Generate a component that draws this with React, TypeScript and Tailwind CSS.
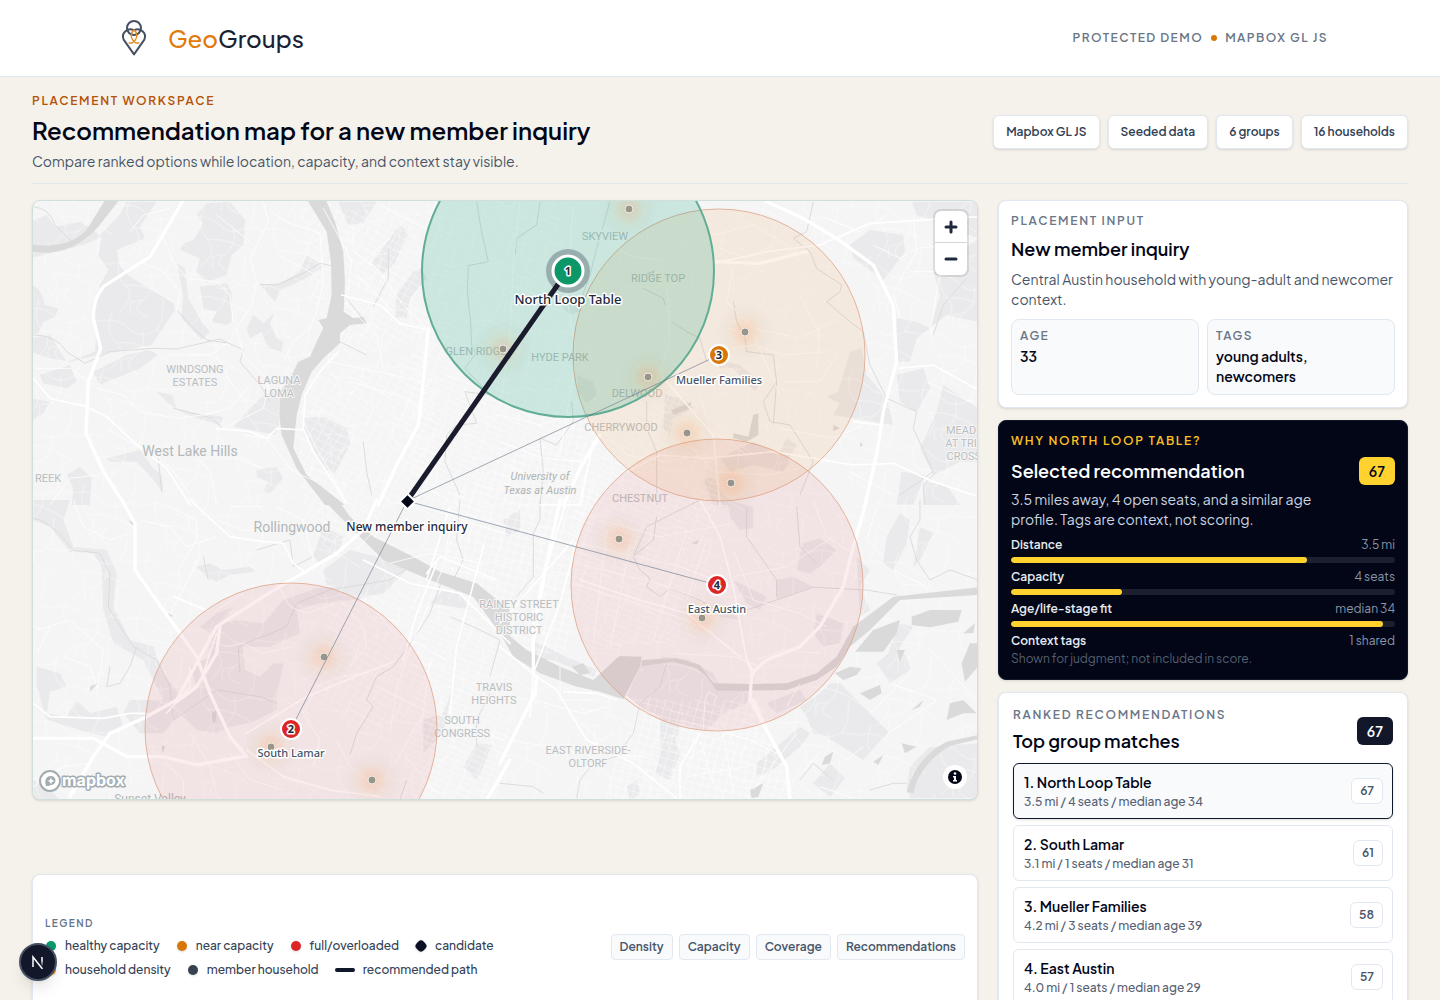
import React from "react";

type Quad = {
  id: string;
  at: string;
  parks: string[];
  water: string[];
  streams: string[];
  minor: string[];
  major: string[];
  highway: string[];
};

/* Base map geometry, split in four tiles drawn at three units per pixel. */
const tiles: Quad[] = [
  {
    id: "nw",
    at: "translate(30 195) scale(0.3333)",
    parks: [
      "M0 80L50 60 75 95 150 80 210 120 270 60 290 20 380 20 330 95 345 130 260 165 270 215 300 245 430 325 435 345 365 450 215 478 120 500 60 490 0 470 0 430 60 420 110 500 195 470 200 400 190 330 210 270 235 225 205 180 215 125 160 150 0 190Z",
      "M0 270Q30 270 45 330L85 340 75 365 40 380 25 415 0 420Z",
      "M530 25L600 20 645 75 640 150 605 180 590 240 530 262 500 230 510 190 450 165 460 145 490 135 520 85 500 60Z",
      "M510 275L590 265 605 290 605 380 590 390 545 380 560 350 520 340Z",
      "M440 205L465 220 475 310 515 380 540 410 515 435 455 370 460 300Z",
      "M650 400L670 360 700 385 735 350 720 385 740 430 760 440 755 470 715 460 695 410 660 430Z",
      "M925 20L1040 20 1000 85 955 90Z",
      "M1110 90L1135 115 1110 165 1095 205 1060 235 1025 205 1065 150Z",
      "M820 668L880 665 950 700 962 745 915 835 880 820 850 760 820 710Z",
      "M610 695L690 610 750 575 748 695 735 720Z",
      "M380 590L430 600 440 640 500 655 580 665 570 690 500 670 450 650 410 620Z",
      "M110 840L150 815 185 850 180 930 125 930 130 880Z",
      "M30 540L120 510 140 560 110 580 40 565Z",
      "M190 530L290 480 360 465 385 480 330 520 230 560 210 570Z",
      "M0 610L60 620 40 655 0 680Z",
      "M230 790L330 765 370 820 395 840 400 895 375 860 320 800 240 800Z",
      "M680 825L740 815 760 850 720 895 700 890 715 860 680 845Z",
      "M1100 300L1150 230 1175 220 1190 250 1140 310 1130 370 1095 365Z",
      "M690 270L750 265 810 230 830 180 880 215 830 250 750 285 735 320Z",
    ],
    water: [
      "M832 15L888 15 915 80 940 170 945 260 941 350 970 370 1000 365 1010 385 960 390 930 415 930 445 880 490 845 530 815 600 800 660 748 660 752 590 785 540 805 500 840 485 865 430 880 400 865 375 890 370 905 300 903 200 890 110Z",
      "M748 660L800 660 790 760 830 840 945 930 885 930 800 820 755 720Z",
      "M0 148Q110 165 170 105L225 15 268 15 205 95Q120 190 0 170Z",
    ],
    streams: [
      "M10 35Q60 40 75 90L120 135",
      "M10 420Q80 420 110 470L165 505 240 470 370 460 440 462 570 432 640 465 630 500 690 570 720 620",
      "M690 268L740 270 820 235 870 205 905 212",
      "M440 345L490 400 530 435 600 445",
      "M1030 335L1075 250 1075 160M950 310L1010 385",
      "M1340 20L1355 110 1375 200 1315 212 1312 290 1322 380 1325 450 1338 475 1305 520 1380 600 1305 590 1340 685 1280 690 1250 720 1245 800 1290 900",
      "M430 640L550 670 575 700M385 790L395 890",
      "M1000 740L1010 830 1025 900",
      "M930 440L1010 480",
    ],
    minor: [
      "M700 20L715 80 660 190 680 260 665 330 620 400 640 480 720 560 700 640 580 700",
      "M720 50L780 85 870 115 880 260 860 350 840 400 790 440 760 500",
      "M400 130L430 200 470 250 560 260 600 300 610 380",
      "M200 580L280 600 330 650 440 670 520 660 600 640 660 570",
      "M1040 20L1100 60 1190 100M970 90L970 170 1040 220 1120 330 1190 400",
      "M880 40L940 150 965 200 950 330 1040 420 1060 520",
      "M330 200L400 230 450 290 440 350M420 480L480 480 540 480 600 440",
      "M20 520L120 520 190 570M230 700L330 760 390 790 440 840 500 930",
      "M60 930L120 850 200 840M640 720L710 730 790 830 860 860",
      "M820 680L860 760 940 900M960 560L1100 600 1180 640M900 500L1180 560",
      "M980 240L1090 350M1000 200L1080 130M560 480L600 560 650 620",
      "M300 110L340 60 420 40M560 60L660 140M740 180L860 240",
      "M560 720L620 790 700 820M480 760L540 830 560 930",
    ],
    major: [
      "M10 550L60 610 170 635 230 665 310 740 410 820 480 930",
      "M560 700L660 710 710 730 740 700 820 705 825 600 870 530 925 470",
      "M820 700L850 770 890 830 950 925",
      "M935 300L1050 330 1110 385 1195 405",
    ],
    highway: [
      "M460 15L360 185 220 275Q190 310 190 370L212 460 175 560 168 715 220 830 285 930",
      "M1195 400L1180 560 1165 690 1100 810 1045 930",
    ],
  },
  {
    id: "ne",
    at: "translate(500 195) scale(0.3333)",
    parks: [
      "M1050 150L1110 105 1210 120 1215 170 1170 230 1150 255 1060 190Z",
      "M1235 20L1435 20 1435 130 1330 90 1250 60Z",
      "M1300 230L1435 130 1435 380 1340 360 1250 430 1230 500 1185 500 1190 370 1250 380 1290 400 1320 300Z",
      "M1050 470L1085 460 1100 540 1160 610 1180 690 1060 670 1000 660 1020 625 980 605 1015 590Z",
      "M1190 540L1270 520 1290 580 1250 650 1200 620Z",
      "M1330 570L1435 640 1435 800 1380 800 1300 840 1260 760 1310 650Z",
      "M1205 830L1275 840 1240 930 1190 930Z",
      "M495 600L550 610 580 640 520 670 510 720 490 700Z",
      "M660 790L760 740 870 800 850 830 760 810 690 830Z",
      "M650 495L720 510 780 560 765 590 700 520 660 520Z",
      "M610 850L640 850 670 900 720 930 640 930Z",
      "M230 540L280 560 290 600 260 625 235 590Z",
      "M860 730L890 750 860 800 830 790Z",
      "M150 300L210 360 240 350 230 310Z",
      "M1270 860L1340 870 1380 930 1270 930Z",
    ],
    water: [
      "M700 715L745 725 760 660 775 655 775 720 740 740 700 730Z",
      "M515 645L575 620 570 640 520 660Z",
      "M1000 690L1020 700 1000 708Z",
      "M1080 740L1090 750 1080 755Z",
      "M440 235L465 225 460 240 480 255 450 255Z",
    ],
    streams: [
      "M940 20L920 110 880 130 930 170 950 220 1025 270 1020 290 980 320 1050 380 1090 410 1110 510 1160 610 1250 650 1240 700 1300 830 1200 900",
      "M330 20L290 160 270 240 230 350M700 320L710 380 735 430 740 470 820 480 830 560 790 620 810 680 870 690 940 800 900 900",
      "M120 20L110 90 50 130 45 180M430 280L490 310 495 330M515 380L560 410 600 430 620 500",
      "M215 620L220 680 170 750 120 730 130 830 120 930M440 620L440 700 470 770 470 930",
      "M830 560L820 690M1400 250L1330 330 1300 420M1310 830L1270 870 1275 930",
    ],
    minor: [
      "M60 20L40 200 30 420 0 640M220 30L200 300 230 480 180 780",
      "M640 120L760 90 860 150 900 200M660 160L740 190 820 150",
      "M700 210L680 320 760 400 900 430 1000 380M650 470L760 450 850 480 980 470",
      "M860 560L960 560 1010 480M840 700L1000 730 1090 690",
      "M1120 150L1200 190 1250 160 1340 150M1240 60L1250 170 1180 290 1200 370",
      "M980 70L1080 110 1160 60M300 100L380 180 500 200M500 240L510 440 470 560",
      "M280 680L380 780 500 800 620 780M560 740L640 830 800 840 900 820",
      "M0 660L120 690 210 660M0 740L130 790 250 800M600 600L630 700 740 780",
      "M1230 230L1320 230 1290 420M1280 560L1410 620M1050 830L1180 900",
      "M900 300L960 420 950 520M680 400L760 420 840 600",
    ],
    major: [
      "M640 205L800 170 960 150 1110 85 1435 65",
      "M380 830L480 780 620 790 820 770 1060 810 1180 805 1300 860 1435 905",
      "M1195 520L1300 510 1435 585M1060 680L1140 690",
      "M120 930L240 930 280 740",
      "M500 560L640 720 660 930",
    ],
    highway: [
      "M800 20L900 65 1010 130 1120 210 1180 330 1190 500 1150 650 1130 780 1095 930",
      "M300 720L240 820 190 930",
      "M640 200L780 205 920 170",
    ],
  },
  {
    id: "sw",
    at: "translate(30 500) scale(0.3333)",
    parks: [
      "M75 0L120 0 100 60 130 140 230 150 260 220 250 320 300 420 370 440 400 520 460 600 500 560 480 500 540 470 540 380 620 360 700 370 760 300 860 265 1000 250 1100 200 1140 200 1060 280 970 300 870 310 800 330 810 400 720 440 640 440 645 510 690 530 730 490 760 490 740 590 740 630 660 670 600 680 560 700 500 690 450 640 400 700 330 700 280 640 300 600 400 600 340 480 250 430 220 330 215 200 190 160 120 155 60 80 10 60 10 0Z",
      "M500 200L540 190 580 210 660 200 675 215 600 225 560 245 530 230Z",
      "M880 210L960 150 1040 170 1120 190 1080 240 980 262 890 255Z",
      "M20 500L90 520 110 560 60 575 50 640 110 650 140 600 180 640 260 620 280 680 230 710 150 690 50 660 20 560Z",
      "M880 80L940 110 925 160 870 195 850 165Z",
      "M1180 660L1240 640 1270 560 1240 700 1180 760Z",
      "M1340 730L1385 735 1360 800 1340 840 1300 800Z",
      "M10 840L60 870 90 900 10 900Z",
      "M1240 270L1290 280 1320 330 1270 320 1200 310Z",
      "M510 380L560 340 610 320 590 350 540 400Z",
    ],
    water: [
      "M880 0L925 0 960 50 1030 110 1150 170 1230 215 1340 250 1440 330 1440 440 1410 400 1330 290 1200 240 1060 180 990 110Z",
      "M295 60L315 68 308 76Z",
      "M415 340L430 348 415 352Z",
      "M395 735L405 740 398 760Z",
      "M545 640L560 630 558 665 548 670Z",
      "M180 560L205 548 180 575Z",
    ],
    streams: [
      "M10 55Q60 60 130 150L210 160 240 220 235 320 290 410 310 440 380 480 420 560 430 660 460 640 560 570 690 590 740 610",
      "M320 440L300 500 270 550 230 560 240 500M630 520L625 440 770 380 800 310 900 270 1080 240 1140 200",
      "M1240 230L1200 340 1150 420 1090 500 1040 530 1010 600 1030 620 980 700 960 765",
      "M1290 0L1280 120 1300 180 1270 240 1280 280M1260 350L1330 380 1410 420 1380 530",
      "M520 170L535 240M1380 580L1340 660 1340 740M1130 840L1110 900",
      "M680 150L780 120 790 200 850 170",
    ],
    minor: [
      "M130 0L160 80 240 120 300 100M330 60L420 80 470 140 560 110",
      "M420 340L480 230 500 180M440 290L520 330M560 330L640 280",
      "M20 390L120 360 220 450 200 580M100 470L180 500 200 560",
      "M560 60L640 90 780 90M600 20L700 20M740 20L820 60 850 180",
      "M530 420L590 440 640 430 700 460 790 440M860 560L930 530 1010 520 1100 480",
      "M850 580L820 640 870 720 850 800M930 300L1000 380 1010 440 960 500",
      "M740 250L780 320 830 340 920 310M1030 320L1090 400 1180 440 1250 480",
      "M1260 80L1240 200 1160 400 1100 560 1080 700M1180 20L1420 100",
      "M1200 480L1180 640 1090 800M1220 640L1420 720M1040 560L1200 640",
      "M920 720L960 800 1070 880M1120 760L1220 880M10 860L100 800 180 790",
      "M480 700L540 800 560 880M380 760L460 840 460 890M600 760L660 840 760 870",
      "M420 20L500 60 500 120 440 220M60 380L20 460",
      "M1080 190L1200 160 1360 190M980 150L1060 60",
    ],
    major: [
      "M480 0L600 110 660 120 760 130 790 190 830 220",
      "M10 610L60 650 220 655 300 640 350 640M1000 180L1140 250 1290 280 1340 330 1440 430",
      "M1190 220L1230 170 1400 240M430 290L530 330M650 700L830 590 1000 520 1080 490",
      "M480 500L480 560 410 640M560 400L520 520M1220 190L1160 340 1120 480",
      "M1260 20L1190 240M1360 140L1280 440 1260 640",
      "M650 750L760 830 900 870 1050 890",
    ],
    highway: [
      "M275 0L315 70 315 210 400 330 500 470 540 580 600 710 650 770",
      "M1040 0L1000 90 920 160 800 230 700 290 560 380 440 600 350 650 240 700 190 770 120 890",
      "M10 715L190 715 290 770 400 770 500 795 640 770",
      "M570 380L560 460 500 560 440 605",
      "M1440 780L1370 900",
    ],
  },
  {
    id: "se",
    at: "translate(500 500) scale(0.3333)",
    parks: [
      "M425 490L490 470 570 480 640 520 660 560 750 570 740 610 670 640 620 690 500 660 420 620 380 590Z",
      "M990 550L1020 550 1165 695 1090 780 980 710 940 700 920 650 900 620 960 580Z",
      "M480 640L530 660 540 690 525 720 540 760 510 840 465 820 480 760Z",
      "M1130 490L1190 440 1220 470 1230 510 1170 550Z",
      "M1200 370L1240 380 1200 440 1190 500 1160 470Z",
      "M1260 80L1300 100 1260 180 1240 200 1250 140Z",
      "M1150 190L1160 110 1200 40 1230 60 1220 130 1180 210Z",
      "M680 0L760 20 760 85 720 90 690 50Z",
      "M910 130L960 115 1010 150 960 200 930 220 890 210 900 160Z",
      "M950 340L1030 370 1020 430 970 440 940 400Z",
      "M830 240L880 230 940 260 830 300Z",
      "M700 240L760 270 800 290 780 330 740 310Z",
      "M770 790L900 680 930 700 900 740 830 800 800 820 770 830Z",
      "M990 790L1035 835 990 890 940 850Z",
      "M1220 870L1230 800 1290 740 1435 730 1435 895 1230 895Z",
      "M1070 170L1110 210 1080 260 1110 330 1080 350Z",
      "M380 860L410 840 420 880 390 900Z",
      "M10 60L60 30 60 90 20 110Z",
      "M650 340L700 340 720 360 660 350Z",
      "M100 420L200 470 290 510 280 530 160 480 100 480Z",
      "M800 610L900 570 920 600 830 640Z",
    ],
    water: [
      "M0 330L20 400 80 450 180 500 280 540 350 475 360 468 425 470 420 500 370 598 300 575 230 560 120 520 40 470 0 400Z",
      "M425 480L530 475 600 495 640 550 760 552 860 550 950 520 1010 470 1060 380 1180 290 1435 262 1435 285 1200 300 1110 390 1050 440 1010 500 950 540 860 570 740 572 650 572 620 530 590 505 520 485 425 498Z",
      "M1065 455L1120 390 1200 360 1190 400 1150 455Z",
      "M1235 350L1290 330 1385 330 1375 365 1290 382 1235 375Z",
      "M1005 520L1050 500 1085 505 1070 525 1030 540Z",
      "M1340 660L1350 610 1390 600 1430 640 1390 640Z",
      "M1385 490L1410 430 1435 430 1435 500 1395 545Z",
      "M1080 580L1140 555 1145 580 1110 600Z",
      "M975 770L1000 755 990 790 965 795Z",
      "M1120 785L1150 765 1135 795Z",
      "M1205 730L1250 740 1215 760Z",
      "M1235 630L1270 600 1260 620Z",
      "M1190 450L1215 450 1200 485Z",
      "M1390 400L1425 370 1420 400Z",
      "M575 130L597 120 590 132Z",
      "M215 500L250 490 270 520 240 525Z",
      "M750 870L790 850 775 890 755 895Z",
      "M1220 875Q1250 770 1340 725L1435 705V718L1350 738Q1260 790 1240 880Z",
    ],
    streams: [
      "M470 50L460 120 400 170 420 210 450 235 440 260 480 290 510 265 600 300 660 340 740 330 830 300 940 262 1100 270 1190 285",
      "M740 20L740 110 830 240 830 290M890 20L900 140 950 190M1260 0L1260 60 1230 110 1250 180 1290 240 1350 210 1435 240",
      "M120 0L120 60 100 100 100 230 50 290M600 0L440 80 400 170",
      "M500 490L480 560 420 610 400 700 370 740M0 850L100 860 130 880M1110 870L1180 850 1220 850",
      "M380 760L280 790 240 840 230 895M900 840L940 790 1000 840",
    ],
    minor: [
      "M240 130L540 200 700 260M230 190L470 250 640 310M220 250L560 360 640 400",
      "M320 90L280 430M390 130L330 450M560 90L460 420M620 120L560 300",
      "M300 60L480 110 700 70M700 150L760 300 900 340 980 380",
      "M700 230L860 200 1000 110M940 0L980 110 1060 160M1130 20L1100 120 1150 170",
      "M520 460L700 470 780 500M770 480L850 450 960 460M860 620L900 550",
      "M610 690L615 600 625 575 650 590 640 610M540 660L700 700 760 640",
      "M180 500L180 600 290 600M200 640L280 700 300 760 430 770",
      "M100 600L250 640 320 620M30 720L240 760 340 700",
      "M560 780L680 700 750 720 830 760M600 720L640 850M670 700L700 880M560 830L740 800",
      "M890 700L760 870M880 840L960 760M1040 780L1090 740M1170 550L1310 600 1165 700",
      "M1240 510L1110 640M1180 210L1280 260M1300 460L1430 600M960 860L1060 895",
    ],
    major: [
      "M600 0L660 110 700 260 740 480",
      "M0 440L110 530 170 570 260 720 400 790 530 895",
      "M190 575L290 580M380 590L440 640M290 580L350 600",
      "M0 370L220 120M540 900L540 800 600 700",
      "M230 130L180 310 100 520 90 650M200 0L140 200 100 440",
      "M240 240L420 300 560 340 720 470",
    ],
    highway: [
      "M1100 0L1060 140 1030 260 960 380 900 440 800 480 755 520 750 600 800 690 860 800 870 900",
      "M740 480L760 520M760 600L800 690",
      "M110 530L105 580 0 790",
      "M180 0L100 380 100 520",
    ],
  },
];

const streetFields = [
  { fill: "url(#gridA)", d: "M300 380L430 350 440 500 400 500 330 560 300 500Z" },
  { fill: "url(#gridB)", d: "M425 201L560 201 580 420 470 520 425 500 400 420 425 300Z" },
  { fill: "url(#gridC)", d: "M445 500L580 420 600 500 570 650 520 660 445 580Z" },
  { fill: "url(#gridB)", d: "M580 420L680 360 720 480 700 640 590 650 570 560Z" },
  { fill: "url(#gridB)", d: "M420 600L470 610 520 670 500 799 400 799 410 700Z" },
  { fill: "url(#gridA)", d: "M330 600L420 590 430 700 370 740 310 700Z" },
  { fill: "url(#gridA)", d: "M300 210L420 210 420 340 350 360 310 300Z" },
  { fill: "url(#lanes)", d: "M33 201H980V799H33Z" },
  { fill: "url(#gridC)", d: "M640 700L760 700 800 799 600 799Z" },
];

const placeLabels: { x: number; y: number; lines: string[] }[] = [
  { x: 195, y: 373, lines: ["WINDSONG", "ESTATES"] },
  { x: 279, y: 384, lines: ["LAGUNA", "LOMA"] },
  { x: 605, y: 240, lines: ["SKYVIEW"] },
  { x: 658, y: 282, lines: ["RIDGE TOP"] },
  { x: 476, y: 355, lines: ["GLEN RIDGE"] },
  { x: 560, y: 361, lines: ["HYDE PARK"] },
  { x: 637, y: 397, lines: ["DELWOOD"] },
  { x: 621, y: 431, lines: ["CHERRYWOOD"] },
  { x: 640, y: 502, lines: ["CHESTNUT"] },
  { x: 973, y: 434, lines: ["MEADOWS", "AT TRINITY", "CROSSING"] },
  { x: 48, y: 482, lines: ["REEK"] },
  { x: 519, y: 608, lines: ["RAINEY STREET", "HISTORIC", "DISTRICT"] },
  { x: 494, y: 691, lines: ["TRAVIS", "HEIGHTS"] },
  { x: 462, y: 724, lines: ["SOUTH", "CONGRESS"] },
  { x: 588, y: 754, lines: ["EAST RIVERSIDE-", "OLTORF"] },
];

const households = [
  [629, 209], [503, 349], [745, 332], [648, 377], [687, 433], [731, 483],
  [619, 539], [702, 618], [324, 657], [271, 747], [372, 780],
];

const groups = [
  { n: "2", name: "South Lamar", x: 291, y: 729, ly: 757, color: "#dc2626" },
  { n: "3", name: "Mueller Families", x: 719, y: 355, ly: 384, color: "#d97706" },
  { n: "4", name: "East Austin", x: 717, y: 585, ly: 613, color: "#dc2626" },
];

function AustinMap() {
  return (
    <svg
      className="absolute inset-0 h-full w-full"
      viewBox="33 201 944 598"
      preserveAspectRatio="xMidYMid slice"
      role="img"
      aria-label="Map of Austin with group coverage"
    >
      <defs>
        <pattern id="gridA" width="9" height="7" patternUnits="userSpaceOnUse" patternTransform="rotate(28)">
          <path d="M0 0H9M0 0V7" stroke="#fff" strokeOpacity="0.700" strokeWidth="1" />
        </pattern>
        <pattern id="gridB" width="12" height="6" patternUnits="userSpaceOnUse" patternTransform="rotate(22)">
          <path d="M0 0H12M0 0V6" stroke="#fff" strokeOpacity="0.700" strokeWidth="1" />
        </pattern>
        <pattern id="gridC" width="8" height="8" patternUnits="userSpaceOnUse" patternTransform="rotate(15)">
          <path d="M0 0H8M0 0V8" stroke="#fff" strokeOpacity="0.900" strokeWidth="1" />
        </pattern>
        <pattern id="lanes" width="74" height="58" patternUnits="userSpaceOnUse" patternTransform="rotate(9)">
          <path
            d="M0 12Q18 4 30 14T58 12L74 12M12 0Q6 20 20 30T18 58M44 14Q52 30 40 42T48 58M20 30Q44 24 74 40M58 12L62 0M30 58L28 46 40 42M62 58L60 38"
            fill="none"
            stroke="#fff"
            strokeOpacity="0.450"
            strokeWidth="1"
          />
        </pattern>
        <radialGradient id="heat">
          <stop offset="0" stopColor="#f08a48" stopOpacity="0.240" />
          <stop offset="0.350" stopColor="#f0a060" stopOpacity="0.170" />
          <stop offset="0.500" stopColor="#d8b884" stopOpacity="0.110" />
          <stop offset="0.750" stopColor="#b8a890" stopOpacity="0.050" />
          <stop offset="1" stopColor="#94a3b8" stopOpacity="0" />
        </radialGradient>
      </defs>

      <rect x="0" y="0" width="1440" height="1000" fill="#f5f5f5" />
      {tiles.map((t) => (
        <g key={t.id} transform={t.at}>
          <path d={t.parks.join("")} fill="#eaeaec" />
        </g>
      ))}
      {streetFields.map((f, i) => (
        <path key={i} d={f.d} fill={f.fill} />
      ))}
      {tiles.map((t) => (
        <g key={t.id} transform={t.at} fill="none" strokeLinejoin="round">
          <path d={t.streams.join("")} stroke="#dcdcdd" strokeWidth="3" />
          <path d={t.water.join("")} fill="#dadada" />
          <path d={t.minor.join("")} stroke="#fff" strokeOpacity="0.800" strokeWidth="3" />
        </g>
      ))}
      {tiles.map((t) => (
        <g key={t.id} transform={t.at} fill="none" stroke="#fff" strokeLinejoin="round" strokeLinecap="round">
          <path d={t.major.join("")} strokeWidth="5" />
          <path d={t.highway.join("")} strokeWidth="10" />
        </g>
      ))}

      <g
        fill="#babdc0"
        stroke="#f6f6f6"
        strokeWidth="2"
        strokeLinejoin="round"
        textAnchor="middle"
        fontFamily="Roboto, sans-serif"
        style={{ paintOrder: "stroke" }}
      >
        {placeLabels.map((p) =>
          p.lines.map((line, i) => (
            <text key={line} x={p.x} y={p.y + i * 13} fontSize="11">
              {line}
            </text>
          )),
        )}
        <g fill="#b3b8b8" fontSize="14">
          <text x="190" y="456">West Lake Hills</text>
          <text x="292" y="532">Rollingwood</text>
          <text x="150" y="803" fontSize="12">Sunset Valley</text>
        </g>
        <g fill="#b0b4b4" fontSize="11" fontStyle="italic">
          <text x="540" y="480">University of</text>
          <text x="540" y="494">Texas at Austin</text>
        </g>
      </g>

      <g strokeWidth="1" stroke="#dc9a7a" strokeOpacity="0.700">
        <circle cx="291" cy="729" r="146" fill="#dc2626" fillOpacity="0.080" />
        <circle cx="717" cy="585" r="146" fill="#dc2626" fillOpacity="0.080" />
        <circle cx="719" cy="355" r="146" fill="#ea8a2e" fillOpacity="0.110" />
      </g>
      <circle cx="568" cy="271" r="146" fill="#10a37a" fillOpacity="0.190" stroke="#62ad96" strokeWidth="2" />

      {households.map(([x, y]) => (
        <circle key={x} cx={x} cy={y} r="30" fill="url(#heat)" />
      ))}
      {households.map(([x, y]) => (
        <circle key={x} cx={x} cy={y} r="4" fill="#99958a" stroke="#f3ece4" strokeWidth="1" />
      ))}

      <g stroke="#64748b" strokeOpacity="0.600" strokeWidth="1">
        <path d="M407 501L719 355M407 501L717 585M407 501L291 729" />
      </g>
      <circle cx="568" cy="271" r="22" fill="#1a1a2e" fillOpacity="0.280" />
      <path d="M407 501L568 270" stroke="#1a1c2e" strokeWidth="5" />
      <circle cx="568" cy="271" r="15" fill="#0d9668" stroke="#fff" strokeWidth="3" />
      {groups.map((g) => (
        <circle key={g.n} cx={g.x} cy={g.y} r="10" fill={g.color} stroke="#fff" strokeWidth="2" />
      ))}
      <rect x="402" y="496" width="11" height="11" rx="1" transform="rotate(45 407.500 501.500)" fill="#020617" stroke="#fff" strokeWidth="2" />

      <g
        textAnchor="middle"
        fontFamily='"Noto Sans", sans-serif'
        fontWeight="500"
        stroke="#fff"
        strokeWidth="3"
        strokeLinejoin="round"
        style={{ paintOrder: "stroke" }}
      >
        <text x="568" y="304" fontSize="13" fill="#1e293b">North Loop Table</text>
        <text x="407" y="531" fontSize="12" fill="#1e293b">New member inquiry</text>
        <text x="568" y="275" fontSize="11" fontWeight="700" fill="#1e293b">1</text>
        {groups.map((g) => (
          <g key={g.n}>
            <text x={g.x} y={g.y + 4} fontSize="11" fontWeight="700" fill="#1e293b">{g.n}</text>
            <text x={g.x} y={g.ly} fontSize="11" fill="#475569">{g.name}</text>
          </g>
        ))}
      </g>

      <g>
        <circle cx="50" cy="781" r="10" fill="#fff" stroke="#a3adb0" strokeWidth="2" />
        <path d="M46 786C44 779 47 776 51 776A4.500 4.500 0 0 1 51 785C49 786 48 786 46 786Z" fill="#a3adb0" />
        <path d="M51 777.500L52 780 54.500 781 52 782 51 784.500 50 782 47.500 781 50 780Z" fill="#fff" />
        <text
          x="62"
          y="786"
          fontFamily="Inter, sans-serif"
          fontSize="16"
          fontWeight="700"
          fill="#fff"
          stroke="#a3adb0"
          strokeWidth="3"
          strokeLinejoin="round"
          style={{ paintOrder: "stroke" }}
        >
          mapbox
        </text>
      </g>
    </svg>
  );
}

function Logo() {
  return (
    <svg viewBox="0 6 132 132" className="h-11 w-11" fill="none" strokeWidth="6" strokeLinejoin="round" aria-hidden="true">
      <g stroke="#475063">
        <circle cx="66" cy="42" r="21" />
        <path d="M66 49A22 22 0 0 0 35 77L66 121 97 77A22 22 0 0 0 66 49" />
      </g>
      <g stroke="#e28a1c" strokeWidth="4">
        <path d="M66 47C54 58 54 75 72 87H82M66 47C78 58 78 75 60 87H50" />
      </g>
    </svg>
  );
}

const badges = ["Mapbox GL JS", "Seeded data", "6 groups", "16 households"];
const layers = ["Density", "Capacity", "Coverage", "Recommendations"];

const factors = [
  { label: "Distance", value: "3.5 mi", pct: 77 },
  { label: "Capacity", value: "4 seats", pct: 29 },
  { label: "Age/life-stage fit", value: "median 34", pct: 97 },
];

const matches = [
  { name: "1. North Loop Table", meta: "3.5 mi / 4 seats / median age 34", score: 67 },
  { name: "2. South Lamar", meta: "3.1 mi / 1 seats / median age 31", score: 61 },
  { name: "3. Mueller Families", meta: "4.2 mi / 3 seats / median age 39", score: 58 },
  { name: "4. East Austin", meta: "4.0 mi / 1 seats / median age 29", score: 57 },
];

function Legend({ swatch, children }: { swatch: string; children: string }) {
  return (
    <li className="flex items-center gap-2">
      <span className={swatch} />
      {children}
    </li>
  );
}

export default function App() {
  return (
    <div className="min-h-screen bg-[#f5f2eb] font-['Plus_Jakarta_Sans',Inter,sans-serif] text-[#020617]">
      <header className="border-b border-slate-200 bg-white">
        <div className="mx-auto flex h-19 max-w-7xl items-center justify-between px-8">
          <a href="#" className="flex items-center gap-3">
            <Logo />
            <span className="text-2xl font-medium text-[#1a1f33]">
              <span className="text-[#e07b0c]">Geo</span>Groups
            </span>
          </a>
          <p className="flex items-center gap-2 text-xs leading-4 font-semibold tracking-[0.12em] text-[#6b7688]">
            PROTECTED DEMO
            <span className="h-1.5 w-1.5 rounded-full bg-[#d97706]" />
            MAPBOX GL JS
          </p>
        </div>
      </header>

      <main className="px-8 pb-8">
        <div className="flex items-center justify-between gap-6 border-b border-slate-200 pt-4 pb-3">
          <div>
            <p className="text-xs leading-4 font-semibold tracking-[0.14em] text-[#b45309]">PLACEMENT WORKSPACE</p>
            <h1 className="mt-[5px] text-2xl leading-8 font-semibold">
              Recommendation map for a new member inquiry
            </h1>
            <p className="mt-[5px] text-sm leading-5 text-[#475569]">
              Compare ranked options while location, capacity, and context stay visible.
            </p>
          </div>
          <ul className="flex gap-2">
            {badges.map((b) => (
              <li
                key={b}
                className="rounded-md border border-slate-200 bg-white px-3 py-2 text-xs leading-4 font-semibold whitespace-nowrap text-[#334155] shadow-sm"
              >
                {b}
              </li>
            ))}
          </ul>
        </div>

        <div className="mt-4 grid grid-cols-[minmax(0,1fr)_410px] items-start gap-5">
          <div>
            <section className="relative h-[600px] overflow-hidden rounded-lg border border-[#cfdfdb] bg-[#f5f5f5] shadow-sm">
              <AustinMap />
              <div className="absolute top-[10px] right-[10px] flex flex-col divide-y divide-gray-300 overflow-hidden rounded-md bg-white text-[#1e293b] shadow-[0_0_0_2px_rgba(0,0,0,0.1)]">
                <button type="button" aria-label="Zoom in" className="flex h-8 w-8 items-center justify-center">
                  <svg viewBox="0 0 14 14" className="h-3.5 w-3.5" stroke="currentColor" strokeWidth="3" strokeLinecap="round">
                    <path d="M2 7H12M7 2V12" />
                  </svg>
                </button>
                <button type="button" aria-label="Zoom out" className="flex h-8 w-8 items-center justify-center">
                  <svg viewBox="0 0 14 14" className="h-3.5 w-3.5" stroke="currentColor" strokeWidth="3" strokeLinecap="round">
                    <path d="M2 7H12" />
                  </svg>
                </button>
              </div>
              <button
                type="button"
                aria-label="Map attribution"
                className="absolute right-[10px] bottom-[10px] flex h-6 w-6 items-center justify-center rounded-full bg-white"
              >
                <svg viewBox="0 0 14 14" className="h-3.5 w-3.5">
                  <circle cx="7" cy="7" r="7" fill="#020617" />
                  <circle cx="7" cy="3.500" r="1.300" fill="#fff" />
                  <path d="M5 6H8V10H9V11.500H5V10H6V7.500H5Z" fill="#fff" />
                </svg>
              </button>
            </section>

            <section className="mt-[74px] flex items-center justify-between gap-4 rounded-lg border border-slate-200 bg-white px-3 py-10 text-xs leading-4 font-medium shadow-sm">
              <div className="max-w-[520px]">
                <h2 className="text-[10px] leading-4 font-semibold tracking-[0.14em] text-[#64748b]">LEGEND</h2>
                <ul className="mt-[7px] flex flex-wrap gap-x-4 gap-y-2 text-[#334155]">
                  <Legend swatch="m-px h-2.5 w-2.5 rounded-full bg-[#059669] shadow-sm">healthy capacity</Legend>
                  <Legend swatch="m-px h-2.5 w-2.5 rounded-full bg-[#d97706] shadow-sm">near capacity</Legend>
                  <Legend swatch="m-px h-2.5 w-2.5 rounded-full bg-[#dc2626] shadow-sm">full/overloaded</Legend>
                  <Legend swatch="m-px h-2.5 w-2.5 rotate-45 rounded-sm bg-[#0b1024] shadow-sm">candidate</Legend>
                  <Legend swatch="m-px h-2.5 w-2.5 rounded-full bg-orange-400 shadow-sm">household density</Legend>
                  <Legend swatch="m-px h-2.5 w-2.5 rounded-full bg-[#374151] shadow-sm">member household</Legend>
                  <Legend swatch="h-1 w-5 rounded-full bg-[#0f172a]">recommended path</Legend>
                </ul>
              </div>
              <div className="flex shrink-0 gap-1.5">
                {layers.map((l) => (
                  <button
                    key={l}
                    type="button"
                    className="rounded-sm border border-slate-200 bg-slate-50 px-2 py-1 font-semibold text-[#475569]"
                  >
                    {l}
                  </button>
                ))}
              </div>
            </section>
          </div>

          <aside className="flex flex-col gap-3">
            <section className="rounded-lg border border-slate-200 bg-white p-3 shadow-sm">
              <p className="text-xs leading-4 font-semibold tracking-[0.14em] text-[#6b7688]">PLACEMENT INPUT</p>
              <h2 className="mt-1.5 text-lg leading-7 font-semibold">New member inquiry</h2>
              <p className="mt-1.5 text-sm leading-5 text-[#475569]">
                Central Austin household with young-adult and newcomer context.
              </p>
              <dl className="mt-2.5 grid grid-cols-2 gap-2">
                <div className="rounded-lg border border-slate-200 bg-slate-50 p-2">
                  <dt className="text-xs leading-4 font-semibold tracking-[0.12em] text-[#6b7688]">AGE</dt>
                  <dd className="mt-0.5 text-sm leading-5 font-semibold">33</dd>
                </div>
                <div className="rounded-lg border border-slate-200 bg-slate-50 p-2">
                  <dt className="text-xs leading-4 font-semibold tracking-[0.12em] text-[#6b7688]">TAGS</dt>
                  <dd className="mt-0.5 text-sm leading-5 font-semibold">
                    young adults,
                    <br />
                    newcomers
                  </dd>
                </div>
              </dl>
            </section>

            <section className="rounded-lg border border-[#0f172a] bg-[#020617] p-3 text-xs leading-4 text-white shadow-sm">
              <p className="font-semibold tracking-[0.14em] text-[#fbbf24]">WHY NORTH LOOP TABLE?</p>
              <div className="mt-2 flex items-center justify-between">
                <h2 className="text-lg leading-7 font-semibold">Selected recommendation</h2>
                <span className="rounded-md bg-[#ffd230] px-2.5 py-1 text-sm leading-5 font-semibold text-[#020617]">67</span>
              </div>
              <p className="mt-1 max-w-[330px] text-sm leading-5 text-[#cbd5e1]">
                3.5 miles away, 4 open seats, and a similar age profile. Tags are context, not scoring.
              </p>
              <div className="mt-2 flex flex-col gap-1.5">
                {factors.map((f) => (
                  <div key={f.label}>
                    <div className="flex justify-between">
                      <span className="font-semibold text-[#e8ecf1]">{f.label}</span>
                      <span className="text-[#8d97a8]">{f.value}</span>
                    </div>
                    <div className="mt-1 h-1.5 overflow-hidden rounded-full bg-white/10">
                      <div className="h-full rounded-full bg-[#ffd230]" style={{ width: `${f.pct}%` }} />
                    </div>
                  </div>
                ))}
                <div>
                  <div className="flex justify-between">
                    <span className="font-semibold text-[#e8ecf1]">Context tags</span>
                    <span className="text-[#8d97a8]">1 shared</span>
                  </div>
                  <p className="mt-0.5 text-[#56606f]">Shown for judgment; not included in score.</p>
                </div>
              </div>
            </section>

            <section className="rounded-lg border border-slate-200 bg-white p-3.5 shadow-sm">
              <div className="flex items-center justify-between">
                <div>
                  <p className="text-xs leading-4 font-semibold tracking-[0.14em] text-[#6b7688]">RANKED RECOMMENDATIONS</p>
                  <h2 className="mt-1 text-lg leading-7 font-semibold">Top group matches</h2>
                </div>
                <span className="rounded-md bg-[#12172a] px-2.5 py-1 text-sm leading-5 font-semibold text-white">67</span>
              </div>
              <div className="mt-2 flex flex-col gap-1.5">
                {matches.map((m, i) => (
                  <button
                    key={m.name}
                    type="button"
                    className={
                      i === 0
                        ? "flex items-center justify-between rounded-md border border-[#0f172a] bg-slate-50 py-2 pr-[9px] pl-2.5 text-left shadow-sm"
                        : "flex items-center justify-between rounded-md border border-slate-200 bg-white py-2 pr-[9px] pl-2.5 text-left"
                    }
                  >
                    <span>
                      <span className="block text-sm leading-5 font-semibold">{m.name}</span>
                      <span className="mt-0.5 block text-xs leading-4 font-medium text-[#566173]">{m.meta}</span>
                    </span>
                    <span className="rounded-md border border-slate-200 bg-white px-2 py-1 text-xs leading-4 font-semibold text-[#475569]">
                      {m.score}
                    </span>
                  </button>
                ))}
              </div>
            </section>
          </aside>
        </div>
      </main>

      <button
        type="button"
        aria-label="Open developer tools"
        className="fixed bottom-[19px] left-[19px] flex h-[38px] w-[38px] items-center justify-center rounded-full border-2 border-[#475063] bg-[#12172a] shadow-lg"
      >
        <svg viewBox="0 0 14 14" className="h-3.5 w-3.5" fill="none" strokeWidth="1.500">
          <defs>
            <linearGradient id="fadeDown" x1="0" y1="0" x2="0" y2="14" gradientUnits="userSpaceOnUse">
              <stop offset="0.400" stopColor="#fff" />
              <stop offset="0.800" stopColor="#fff" stopOpacity="0.100" />
            </linearGradient>
          </defs>
          <path d="M2 12V2L11.500 14" stroke="#fff" />
          <path d="M11 2V11" stroke="url(#fadeDown)" />
        </svg>
      </button>
    </div>
  );
}
